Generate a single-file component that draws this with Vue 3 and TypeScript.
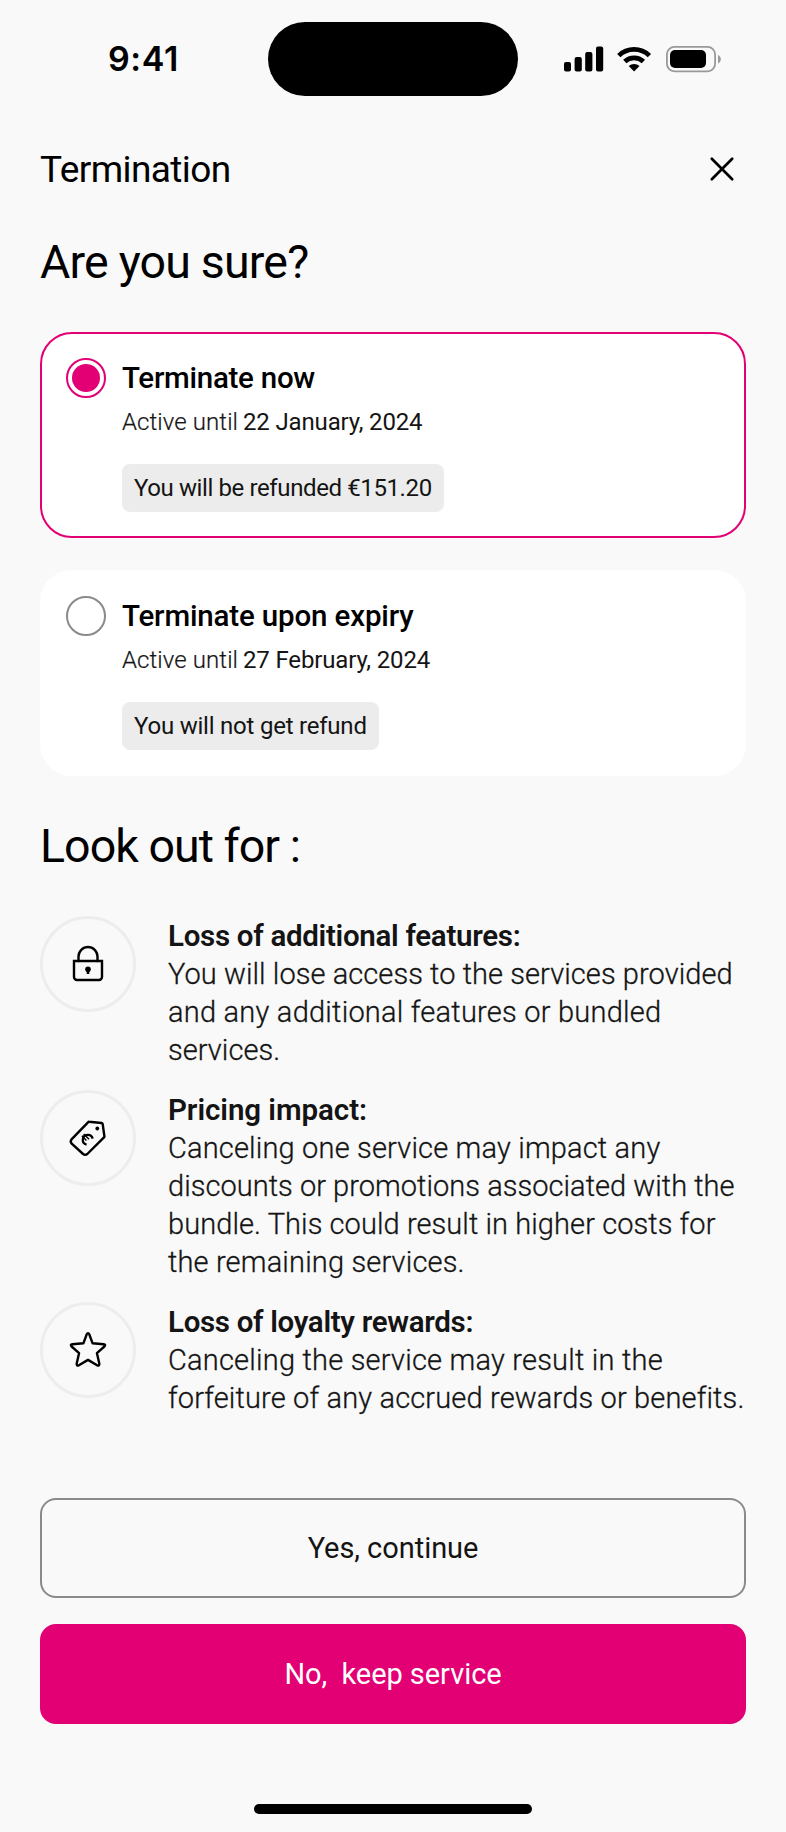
<script setup lang="ts">
import { ref } from 'vue'

interface Line { text: string; tracking: number }
interface Option { id: string; title: string; titleTracking: number; date: string; note: string; noteTracking: number }
interface Warning { icon: 'lock' | 'tag' | 'star'; title: Line; lines: Line[] }

const selected = ref('now')

const options: Option[] = [
  { id: 'now', title: 'Terminate now', titleTracking: -0.26, date: '22 January, 2024', note: 'You will be refunded €151.20', noteTracking: -0.39 },
  { id: 'expiry', title: 'Terminate upon expiry', titleTracking: -0.15, date: '27 February, 2024', note: 'You will not get refund', noteTracking: -0.22 },
]

const warnings: Warning[] = [
  {
    icon: 'lock',
    title: { text: 'Loss of additional features:', tracking: -0.3 },
    lines: [
      { text: 'You will lose access to the services provided', tracking: 0.07 },
      { text: 'and any additional features or bundled', tracking: 0.23 },
      { text: 'services.', tracking: 0.05 },
    ],
  },
  {
    icon: 'tag',
    title: { text: 'Pricing impact:', tracking: -0.06 },
    lines: [
      { text: 'Canceling one service may impact any', tracking: 0.17 },
      { text: 'discounts or promotions associated with the', tracking: 0.04 },
      { text: 'bundle. This could result in higher costs for', tracking: 0.08 },
      { text: 'the remaining services.', tracking: 0.16 },
    ],
  },
  {
    icon: 'star',
    title: { text: 'Loss of loyalty rewards:', tracking: -0.32 },
    lines: [
      { text: 'Canceling the service may result in the', tracking: 0.21 },
      { text: 'forfeiture of any accrued rewards or benefits.', tracking: 0.15 },
    ],
  },
]

const track = (value: number) => ({ letterSpacing: `${value}px` })
</script>

<template>
  <main class="screen">
    <header class="status">
      <span class="time">9:41</span>
      <span class="island"></span>
      <svg class="indicators" width="160" height="30" viewBox="562 44 160 30">
        <rect x="564" y="62" width="7" height="9.6" rx="2" />
        <rect x="574.6" y="57" width="7.2" height="14.6" rx="2" />
        <rect x="585.2" y="52" width="7.2" height="19.6" rx="2" />
        <rect x="596" y="46.4" width="7.2" height="25.2" rx="2" />
        <g fill="none" stroke="#000" stroke-width="4.8">
          <path d="M618.8 55.6a22 22 0 0 1 30.6 0" />
          <path d="M624.8 61.6a13.6 13.6 0 0 1 18.6 0" />
        </g>
        <path d="M628.7 66.1a8 8 0 0 1 10.8 0l-5.4 5.5z" />
        <rect x="666.9" y="46.9" width="48.2" height="24.4" rx="7.6" fill="none" stroke="#999" stroke-width="1.8" />
        <rect x="670" y="50" width="36" height="18" rx="5" />
        <path d="M718 55v8.4c1.7-.7 2.8-2.3 2.8-4.2s-1.1-3.5-2.8-4.2z" fill="#999" />
      </svg>
    </header>

    <div class="bar">
      <span class="bar-title">Termination</span>
      <button class="close" aria-label="Close">
        <svg width="26" height="26" viewBox="0 0 26 26"><path d="M2.8 2.8l20.4 20.4M23.2 2.8L2.8 23.2" fill="none" stroke="#000" stroke-width="2.7" stroke-linecap="round" /></svg>
      </button>
    </div>

    <h1 class="heading question">Are you sure?</h1>

    <section class="options">
      <label v-for="o in options" :key="o.id" class="card" :class="{ active: selected === o.id }" @click="selected = o.id">
        <span class="radio"></span>
        <span class="details">
          <span class="option-title" :style="track(o.titleTracking)">{{ o.title }}</span>
          <span class="until"><span class="light">Active until</span><span class="date">{{ o.date }}</span></span>
          <span class="chip" :style="track(o.noteTracking)">{{ o.note }}</span>
        </span>
      </label>
    </section>

    <h2 class="heading lookout">Look out for :</h2>

    <ul class="warnings">
      <li v-for="w in warnings" :key="w.icon" class="warning">
        <span class="badge">
          <svg width="90" height="90" viewBox="3 3 90 90" fill="none" stroke="#000" stroke-width="2.4" stroke-linejoin="round" stroke-linecap="round">
            <template v-if="w.icon === 'lock'">
              <path d="M34 45h28v16a3 3 0 0 1-3 3H37a3 3 0 0 1-3-3z" stroke-linejoin="miter" />
              <path d="M38.5 45v-4.5a9.5 9.5 0 0 1 19 0V45" />
              <circle cx="48" cy="53.2" r="2.8" fill="#000" stroke="none" />
              <path d="M48 54v4" stroke-width="2.6" stroke-linecap="butt" />
            </template>
            <template v-else-if="w.icon === 'tag'">
              <path d="M49.1 31.8L61.600 33q1 .1 1.100 1.100l1.700 12.300q0 .6-.4 1L47.300 64q-2.100 1.700-4.200 0L31.700 53.600q-1.800-2-.2-4.200L48 32.300q.5-.6 1.100-.5z" />
              <circle cx="57.3" cy="38.5" r="1.900" fill="#000" stroke="none" />
              <g transform="rotate(45 47.3 49.3)" stroke-width="2.300" stroke-linecap="butt">
                <path d="M50.600 45a5 5 0 1 0 0 8.600" />
                <path d="M41 48h7.500M41 50.700h6.500" stroke-width="1.500" />
              </g>
            </template>
            <path v-else d="M46.700 32.300q1.300-2.400 2.600 0l3.300 9 11 .9q2.600.4.8 2.300L56.900 51.100l2.400 10.300q.3 2.900-2.200 1.900L48 57.900l-9.100 5.400q-2.500 1-2.200-1.900l2.400-10.300L31.600 44.500q-1.800-1.900.8-2.300l11-.9z" />
          </svg>
        </span>
        <div class="copy">
          <strong class="copy-title" :style="track(w.title.tracking)">{{ w.title.text }}</strong>
          <span v-for="l in w.lines" :key="l.text" class="copy-line" :style="track(l.tracking)">{{ l.text }}</span>
        </div>
      </li>
    </ul>

    <div class="actions">
      <button class="button outline">Yes, continue</button>
      <button class="button primary">No,&nbsp; keep service</button>
    </div>

    <span class="home"></span>
  </main>
</template>

<style>
body { margin: 0; background: #f9f9f9; }
</style>

<style scoped>
.screen {
  box-sizing: border-box;
  width: 786px;
  height: 1832px;
  padding: 0 40px 18px;
  display: flex;
  flex-direction: column;
  background: #f9f9f9;
  color: #000;
  font-family: Roboto, "Liberation Sans", sans-serif;
  overflow: hidden;
}
.status {
  height: 118px;
  flex: none;
  display: grid;
  grid-template-columns: 228px 250px 1fr;
}
.time { padding: 38px 0 0 68px; font: 600 34px/41px Inter, sans-serif; letter-spacing: 0.6px; }
.island { height: 74px; margin-top: 22px; border-radius: 37px; background: #000; }
.indicators { margin: 44px 0 0 44px; }
.bar { height: 102px; flex: none; display: flex; align-items: center; justify-content: space-between; }
.bar-title { padding-top: 2px; font-size: 37px; line-height: 44px; letter-spacing: -0.6px; }
.close { padding: 0; margin: 0 11.5px 0 0; border: 0; background: none; display: flex; }
.heading { margin: 0; font-size: 46.5px; font-weight: 400; line-height: 56px; }
.question { margin-top: 14px; letter-spacing: -0.8px; }
.options { margin-top: 42px; display: flex; flex-direction: column; gap: 32px; }
.card {
  box-sizing: border-box;
  height: 206px;
  display: flex;
  gap: 16px;
  padding: 24px;
  border: 2px solid #fff;
  border-radius: 32px;
  background: #fff;
}
.radio { box-sizing: border-box; flex: none; width: 40px; height: 40px; border: 2px solid #8a8a8a; border-radius: 50%; }
.card.active { border-color: #e20074; }
.active .radio { border-color: #e20074; padding: 4px; background: #e20074 content-box; }
.details { display: flex; flex-direction: column; align-items: flex-start; }
.option-title { font-size: 29.5px; font-weight: 500; line-height: 40px; }
.until { display: flex; margin-top: 8px; font-size: 24px; line-height: 32px; color: #141414; }
.light { width: 121px; font-weight: 300; letter-spacing: 0.09px; -webkit-text-stroke: 0.2px #141414; }
.date { letter-spacing: -0.15px; }
.chip { margin-top: 26px; padding: 0 12px; border-radius: 8px; background: #ececec; color: #141414; font-size: 24px; line-height: 48px; }
.lookout { margin-top: 42px; letter-spacing: -0.95px; }
.warnings { list-style: none; margin: 42px 0 0; padding: 0; display: flex; flex-direction: column; gap: 22px; }
.warning { display: flex; gap: 32px; }
.badge { box-sizing: border-box; flex: none; width: 96px; height: 96px; border: 3px solid #ededed; border-radius: 50%; display: flex; }
.copy { display: flex; flex-direction: column; padding-top: 1px; margin-bottom: -1px; color: #141414; white-space: nowrap; }
.copy-title { font-size: 29.5px; font-weight: 600; line-height: 38px; }
.copy-line { font-size: 29px; font-weight: 300; line-height: 38px; -webkit-text-stroke: 0.3px #141414; }
.actions { margin-top: auto; display: flex; flex-direction: column; gap: 26px; }
.button {
  box-sizing: border-box;
  height: 100px;
  padding: 0;
  border: 2px solid #8a8a8a;
  border-radius: 16px;
  background: none;
  color: #141414;
  font: 400 29px/38px Roboto, "Liberation Sans", sans-serif;
  letter-spacing: -0.05px;
}
.primary { border-color: #e20074; background: #e20074; color: #fff; }
.home { flex: none; align-self: center; width: 278px; height: 10px; margin-top: 80px; border-radius: 5px; background: #000; }
</style>
